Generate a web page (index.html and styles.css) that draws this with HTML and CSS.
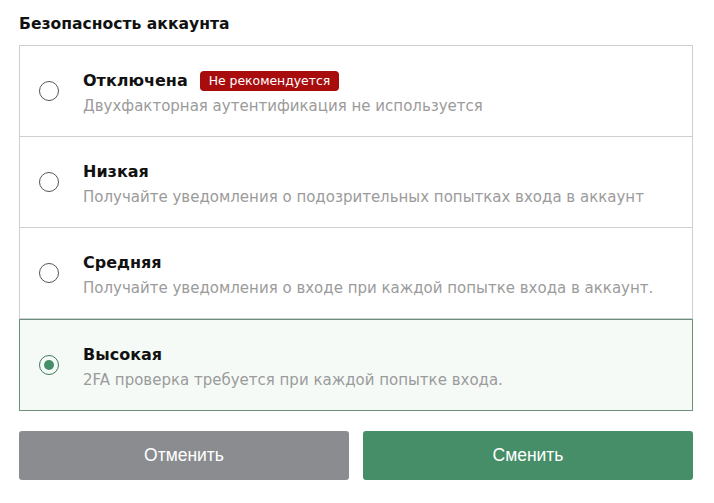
FILE: index.html
```html
<!DOCTYPE html>
<html lang="ru">
<head>
  <meta charset="UTF-8">
  <meta name="viewport" content="width=device-width, initial-scale=1.0">
  <title>Безопасность аккаунта</title>
  <link rel="stylesheet" href="styles.css">
</head>
<body>
  <div class="container">
    <h1>Безопасность аккаунта</h1>
    <div class="options">
      <label class="option">
        <input type="radio" name="level" value="off">
        <span class="radio"></span>
        <span class="text">
          <span class="name">Отключена <span class="badge">Не рекомендуется</span></span>
          <span class="desc">Двухфакторная аутентификация не используется</span>
        </span>
      </label>
      <label class="option">
        <input type="radio" name="level" value="low">
        <span class="radio"></span>
        <span class="text">
          <span class="name">Низкая</span>
          <span class="desc">Получайте уведомления о подозрительных попытках входа в аккаунт</span>
        </span>
      </label>
      <label class="option">
        <input type="radio" name="level" value="mid">
        <span class="radio"></span>
        <span class="text">
          <span class="name">Средняя</span>
          <span class="desc">Получайте уведомления о входе при каждой попытке входа в аккаунт.</span>
        </span>
      </label>
      <label class="option">
        <input type="radio" name="level" value="high" checked>
        <span class="radio"></span>
        <span class="text">
          <span class="name">Высокая</span>
          <span class="desc">2FA проверка требуется при каждой попытке входа.</span>
        </span>
      </label>
    </div>
    <div class="actions">
      <button class="btn btn-cancel">Отменить</button>
      <button class="btn btn-save">Сменить</button>
    </div>
  </div>
</body>
</html>
```

FILE: styles.css
```css
body {
  margin: 0;
  padding: 0;
  background: #fff;
  font-family: "DejaVu Sans", Verdana, sans-serif;
  color: #111;
}
.container {
  padding: 12px 21px 0 19px;
}
.container h1 {
  margin: 0 0 9px;
  font-size: 15.6px;
  font-weight: bold;
  line-height: 24px;
}
.options {
  display: flex;
  flex-direction: column;
}
.option {
  display: flex;
  align-items: center;
  height: 91px;
  box-sizing: border-box;
  border: 1px solid #cfcfcf;
  border-top-width: 0;
  padding-left: 19px;
  cursor: pointer;
}
.option:first-child {
  height: 92px;
  border-top-width: 1px;
}
.option input {
  display: none;
}
.radio {
  width: 20px;
  height: 20px;
  border: 1px solid #555;
  border-radius: 50%;
  box-sizing: border-box;
  flex-shrink: 0;
  margin-right: 24px;
  display: flex;
  align-items: center;
  justify-content: center;
}
.option input:checked ~ .radio {
  border-color: #3e7a5b;
}
.option input:checked ~ .radio::after {
  content: "";
  width: 10px;
  height: 10px;
  border-radius: 50%;
  background: #458e67;
}
.option:has(input:checked) {
  height: 92px;
  background: #f5faf7;
  border: 1px solid #6b8f7c;
}
.text {
  display: flex;
  flex-direction: column;
  margin-top: 6px;
}
.name {
  font-size: 16px;
  font-weight: bold;
  line-height: 24px;
  display: flex;
  align-items: center;
}
.badge {
  margin-left: 12px;
  background: #a80c0c;
  color: #fff;
  font-weight: normal;
  font-size: 12.4px;
  line-height: 20px;
  padding: 0 9px;
  border-radius: 4px;
}
.desc {
  font-size: 15px;
  line-height: 27px;
  color: #9b9b9b;
}
.actions {
  display: flex;
  gap: 14px;
  margin-top: 20px;
}
.btn {
  flex: 1;
  height: 49px;
  border: none;
  border-radius: 3px;
  color: #fff;
  font-family: "Liberation Sans", Arial, sans-serif;
  font-size: 17.5px;
  cursor: pointer;
}
.btn-cancel {
  background: #8a8c8f;
}
.btn-save {
  background: #458e67;
}
```
